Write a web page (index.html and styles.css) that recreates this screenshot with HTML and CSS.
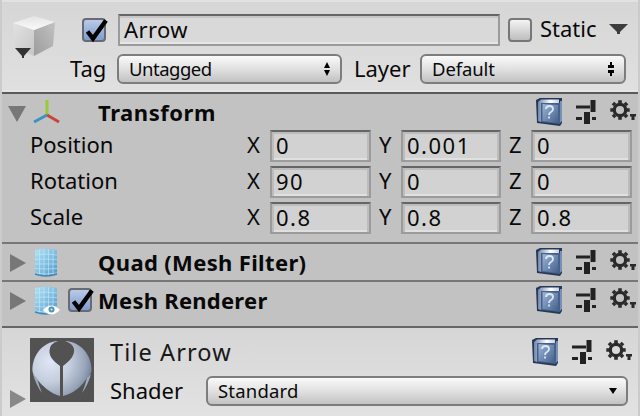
FILE: index.html
```html
<!DOCTYPE html>
<html lang="en">
<head>
<meta charset="utf-8">
<title>Inspector</title>
<link rel="stylesheet" href="styles.css">
</head>
<body>
<svg class="defs" width="0" height="0" aria-hidden="true">
  <defs>
    <linearGradient id="cover" x1="0" y1="0" x2="1" y2="1"><stop offset="0" stop-color="#9db5d6"/><stop offset=".5" stop-color="#6f8bb2"/><stop offset="1" stop-color="#465f8a"/></linearGradient>
    <linearGradient id="page" x1="0" y1="0" x2="1" y2="0"><stop offset="0" stop-color="#7186a8"/><stop offset=".6" stop-color="#fff"/><stop offset="1" stop-color="#c8d0dc"/></linearGradient>
    <linearGradient id="mesh" x1="0" y1="0" x2="1" y2="1"><stop offset="0" stop-color="#b4e2f4"/><stop offset=".5" stop-color="#84c0e2"/><stop offset="1" stop-color="#4f96c6"/></linearGradient>
    <linearGradient id="cubeL" x1="0" y1="0" x2="1" y2="1"><stop offset="0" stop-color="#e2e2e2"/><stop offset="1" stop-color="#c6c6c6"/></linearGradient>
    <linearGradient id="cubeR" x1="1" y1="0" x2="0" y2="1"><stop offset="0" stop-color="#c2c2c2"/><stop offset="1" stop-color="#9c9c9c"/></linearGradient>
    <linearGradient id="cubeT" x1="0" y1="0" x2="0" y2="1"><stop offset="0" stop-color="#e4e4e4"/><stop offset="1" stop-color="#fafafa"/></linearGradient>
    <radialGradient id="ball" gradientUnits="userSpaceOnUse" cx="20" cy="24" r="44"><stop offset="0" stop-color="#dfe6f6"/><stop offset=".45" stop-color="#c5cede"/><stop offset=".8" stop-color="#99a5b9"/><stop offset="1" stop-color="#708099"/></radialGradient>
    <symbol id="tools" viewBox="0 0 102 28">
      <path d="M0 2 4 0h22v25l-2 3L1 25z" fill="#263858"/>
      <path d="M2 4 5 1.500h18v3.500H5v19l-3-1z" fill="url(#page)"/>
      <path d="M5 5h19v21L5 24z" fill="#456089"/>
      <path d="M6.500 6 22 7v18L6.500 23z" fill="url(#cover)"/>
      <path d="M24 3h2v20l-2 2z" fill="#7890b3"/>
      <path d="M10 11q0-3 3.500-3t3.500 3q0 2-2 3t-2 3M13 18.500v2" fill="none" stroke="#dde8f5" stroke-width="1.800"/>
      <path d="M40 7.500h14v3H40zM54.500 2h5v12h-5zM40 19h6v3h-6zM48 14h6v12h-6zM56 19h4v3h-4z" fill="#222"/>
      <circle cx="84" cy="12" r="5.700" fill="none" stroke="#2a2a2a" stroke-width="3.300"/>
      <path d="M84 5V2.300M84 19v2.700M77 12h-2.700M91 12h2.700M79 7l-2-2M89 7l2-2M79 17l-2 2M89 17l2 2" stroke="#2a2a2a" stroke-width="3.600"/>
      <path d="M94 16h6v2.500h-1.500V22h-3v-3.500H94z" fill="#2a2a2a"/>
    </symbol>
    <symbol id="grid" viewBox="0 0 28 30">
      <path d="M1 2q11-3 22 0v24q-11 4-22 0z" fill="url(#mesh)"/>
      <path d="M5.500 2v25M10 1v27M14.500 1v27M19 2v25M1 7q11-2 22 0M1 11.500q11-1 22 0M1 16h22M1 20.500q11 1 22 0M1 25q11 2 22 0" fill="none" stroke="#c8eafa" stroke-width=".9" opacity=".65"/>
      <path d="M1 26q11 4 22 0" fill="none" stroke="#3f88b6" stroke-width="1.500"/>
    </symbol>
    <symbol id="tick" viewBox="0 0 26 28"><path d="m5.500 14.500 5.500 7L24 3.500" fill="none" stroke="#000" stroke-width="4.400"/></symbol>
  </defs>
</svg>
<main class="inspector">
  <header class="object">
    <svg class="cube" width="44" height="44" viewBox="0 0 44 44">
      <path d="m1 8 21 7v26L3 32z" fill="url(#cubeL)"/><path d="M22 15 43 7l-2 24-19 10z" fill="url(#cubeR)"/><path d="m1 8 21-7 21 6-21 8z" fill="url(#cubeT)"/>
      <path d="M3 33h16l-7 8v2h-2v-2z" fill="#333"/>
    </svg>
    <div class="object-rows">
      <div class="row name-row">
        <span class="check on name-check"><svg><use href="#tick"/></svg></span>
        <span class="field name-field">Arrow</span>
        <span class="check static-check"></span>
        <span class="static">Static</span>
        <svg class="caret" width="20" height="10"><path d="M0 0h19l-8 8v2H8V8z" fill="#3c3c3c"/></svg>
      </div>
      <div class="row tag-row">
        <span class="tag">Tag</span>
        <span class="select tag-select">Untagged<svg width="8" height="14"><path d="M4 0 7 6H1zM1 8h6l-3 6z"/></svg></span>
        <span class="layer">Layer</span>
        <span class="select layer-select">Default<svg width="8" height="14"><path d="M3 0h2v3h2v3H1V3h2zM1 8h6v3H5v3H3v-3H1z"/></svg></span>
      </div>
    </div>
  </header>
  <section class="transform">
    <div class="bar">
      <svg class="fold" width="18" height="16"><path d="M0 0h18L9 16z"/></svg>
      <svg class="axes" width="28" height="26" fill="none" stroke-width="3"><path d="M14 17V1" stroke="#9acb32"/><path d="m14 16 12 7" stroke="#cc4337"/><path d="M14 16 1 23" stroke="#3f91c4"/></svg>
      <b class="title title-transform">Transform</b>
      <svg class="tools" width="102" height="28"><use href="#tools"/></svg>
    </div>
    <div class="vectors">
      <span class="prop">Position</span><span>X</span><span class="field">0</span><span class="axis">Y</span><span class="field">0.001</span><span class="axis">Z</span><span class="field">0</span>
      <span class="prop">Rotation</span><span>X</span><span class="field">90</span><span class="axis">Y</span><span class="field">0</span><span class="axis">Z</span><span class="field">0</span>
      <span class="prop">Scale</span><span>X</span><span class="field">0.8</span><span class="axis">Y</span><span class="field">0.8</span><span class="axis">Z</span><span class="field">0.8</span>
    </div>
  </section>
  <section class="quad bar">
    <svg class="fold closed" width="16" height="18"><path d="M0 0v18l16-9z"/></svg>
    <svg class="mesh" width="28" height="30"><use href="#grid"/></svg>
    <b class="title title-quad">Quad (Mesh Filter)</b>
    <svg class="tools" width="102" height="28"><use href="#tools"/></svg>
  </section>
  <section class="renderer bar">
    <svg class="fold closed" width="16" height="18"><path d="M0 0v18l16-9z"/></svg>
    <svg class="mesh" width="28" height="30"><use href="#grid"/><path d="M9 24q8-9 17 0-9 9-17 0" fill="#fff"/><circle cx="17.500" cy="23.500" r="3" fill="#4b94ba"/><circle cx="17.500" cy="23.500" r="1" fill="#e2f2fb"/></svg>
    <span class="check on"><svg><use href="#tick"/></svg></span>
    <b class="title title-renderer">Mesh Renderer</b>
    <svg class="tools" width="102" height="28"><use href="#tools"/></svg>
  </section>
  <section class="material">
    <svg class="fold closed" width="16" height="18"><path d="M0 0v18l16-9z"/></svg>
    <svg class="preview" width="64" height="64">
      <path fill="#525252" d="M0 0h64v64H0z"/>
      <path d="M28 3C12 4 2 18 2.500 33c.5 3 1.500 5 3.500 7 7 9 14 15 24 18V28C22 22 18 17 20 10c1-4 5-6 8-7z" fill="url(#ball)"/>
      <path d="M35 3c3 1 8 3 9 8 1 6-4 12-11 17v30c10-2 18-9 25-19 2-2 3-4 3.500-6C62 18 52 4 35 3z" fill="url(#ball)"/>
      <path d="M3 36q3 11 9 19-3-7-5-15zM61 36q-3 11-9 19 3-7 5-15z" fill="#9eacc2"/>
    </svg>
    <div class="material-body">
      <div class="row material-title"><span class="material-name">Tile Arrow</span><svg class="tools" width="102" height="28"><use href="#tools"/></svg></div>
      <div class="row"><span class="shader">Shader</span><span class="select shader-select">Standard<svg width="8" height="6"><path d="M0 0h8L4 6z"/></svg></span></div>
    </div>
  </section>
</main>
</body>
</html>
```
FILE: styles.css
```css
* { box-sizing: border-box; }
body { margin: 0; }
.defs { position: absolute; }
svg { display: block; flex: none; }
.inspector {
  width: 640px;
  height: 416px;
  overflow: hidden;
  background: #c2c2c2;
  border-left: 2px solid #cbcbcb;
  border-right: 2px solid #cbcbcb;
  font: 22px/29px "Noto Sans", sans-serif;
  color: #090909;
  white-space: nowrap;
}
.row, .bar { display: flex; }
.object {
  display: flex;
  height: 94px;
  border-top: 2px solid #e2e2e2;
  border-bottom: 2px solid #5a5a5a;
  background: linear-gradient(#d6d6d6, #e0e0e0);
  box-shadow: inset 0 -2px #e5e5e5;
}
.cube { margin: 13px 0 0 10px; }
.object-rows { padding-left: 14px; }
.name-row { height: 32px; margin-top: 12px; }
.check {
  width: 24px;
  height: 24px;
  flex: none;
  border: 2px solid #777;
  border-radius: 4px;
  background: linear-gradient(#f4f4f4, #bfbdbe);
}
.check.on { background: linear-gradient(#b9cae7, #7e9dce); border-color: #686b73; }
.check svg { width: 26px; height: 28px; margin: -3px 0 0 -2px; overflow: visible; }
.name-check { margin: 4px 12px 0 12px; }
.static-check { margin: 4px 8px 0; }
.field {
  height: 32px;
  padding-left: 4px;
  line-height: 26px;
  letter-spacing: 1.5px;
  background: #d2d2d2;
  border: 2px solid #9b9b9b;
  border-top-color: #656565;
  box-shadow: inset 0 2px #bcbcbc, inset 2px 0 #bcbcbc, inset -2px 0 #bcbcbc, inset 0 -2px #e0e0e0;
}
.name-field {
  width: 382px;
  letter-spacing: .4px;
  background: #d9d9d9;
  box-shadow: inset 0 2px #c6c6c6, inset 0 -2px #e6e6e6;
}
.static { width: 69px; line-height: 29px; }
.caret { margin-top: 10px; }
.tag-row { height: 30px; margin-top: 8px; }
.tag { width: 47px; }
.layer { width: 66px; margin-left: 12px; }
.select {
  display: flex;
  justify-content: space-between;
  align-items: center;
  height: 30px;
  padding: 0 9px 0 10px;
  border: 2px solid #7d7d7d;
  border-radius: 6px;
  background: linear-gradient(#fafafa, #dedede 55%, #c3c1c2);
  font-size: 18.5px;
  line-height: 24px;
}
.tag-select { width: 225px; letter-spacing: -.5px; }
.layer-select { width: 206px; letter-spacing: -.1px; }
.transform { height: 150px; border-bottom: 2px solid #777; }
.bar { height: 36px; }
.fold { margin: 12px 0 0 6px; fill: #777; }
.axes { margin: 5px 0 0 7px; }
.title { font-weight: 700; line-height: 36px; }
.title-transform { margin-left: 37px; letter-spacing: .55px; }
.tools { margin: 4px 0 0 auto; }
.vectors {
  display: grid;
  grid-template-columns: 217px 23px 101px 30px 100px 30px 101px;
  grid-auto-rows: 32px;
  row-gap: 4px;
  padding-left: 28px;
}
.axis { padding-left: 8px; }
.quad { height: 38px; border-bottom: 2px solid #777; }
.closed { margin: 10px 0 0 8px; }
.mesh { margin: 4px 0 0 8px; }
.title-quad { margin-left: 36px; letter-spacing: .35px; }
.renderer { height: 46px; border-bottom: 2px solid #666; }
.renderer .check { margin: 6px 6px 0 6px; }
.title-renderer { letter-spacing: .25px; }
.material {
  display: flex;
  height: 88px;
  background: linear-gradient(#d6d6d6, #e2e2e2);
}
.material .fold { margin-top: 62px; fill: #888; }
.preview { margin: 10px 0 0 4px; }
.material-body { margin-left: 16px; }
.material-title { width: 524px; height: 48px; padding-top: 10px; }
.material-title .tools { margin: 0 0 0 auto; }
.material-name { font-size: 23.5px; letter-spacing: 1.1px; color: #181818; }
.shader { width: 96px; }
.shader-select { width: 422px; letter-spacing: .2px; }
```
